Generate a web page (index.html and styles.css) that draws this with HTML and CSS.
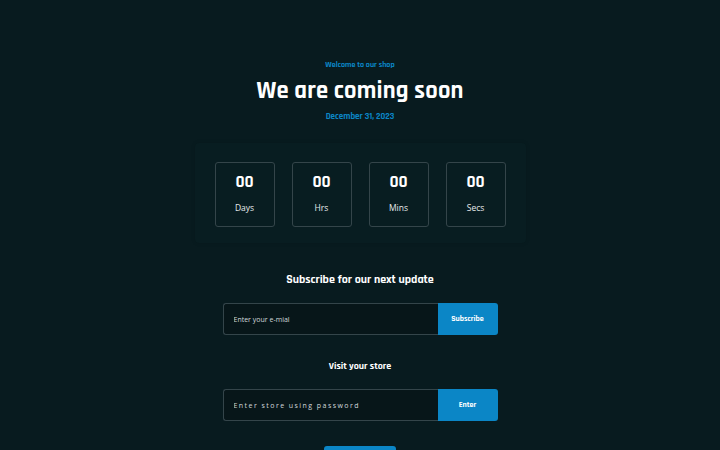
FILE: index.html
```html
<!DOCTYPE html>
<html>
<head>
<meta charset="utf-8">
<link rel="stylesheet" href="styles.css">
</head>
<body>
<main class="page">
  <p class="eyebrow">Welcome to our shop</p>
  <h1 class="title">We are coming soon</h1>
  <p class="date">December 31, 2023</p>
  <div class="countdown">
    <div class="unit"><span class="num">00</span><span class="label">Days</span></div>
    <div class="unit"><span class="num">00</span><span class="label">Hrs</span></div>
    <div class="unit"><span class="num">00</span><span class="label">Mins</span></div>
    <div class="unit"><span class="num">00</span><span class="label">Secs</span></div>
  </div>
  <h2 class="sub-title">Subscribe for our next update</h2>
  <form class="field">
    <input class="input" type="text" placeholder="Enter your e-mial">
    <button class="btn" type="button">Subscribe</button>
  </form>
  <h2 class="sub-title small">Visit your store</h2>
  <form class="field">
    <input class="input spaced" type="password" placeholder="Enter store using password">
    <button class="btn" type="button">Enter</button>
  </form>
  <div class="more"></div>
</main>
</body>
</html>
```
FILE: styles.css
```css
html, body {
  margin: 0;
  padding: 0;
  background: #081b1f;
  height: 100%;
  overflow: hidden;
}
.page {
  display: flex;
  flex-direction: column;
  align-items: center;
  padding-top: 60px;
  font-family: "Rajdhani", "Lato", "Open Sans", sans-serif;
  color: #ffffff;
}
.eyebrow {
  margin: 0;
  font-size: 8px;
  font-weight: 700;
  color: #0b86c6;
  line-height: 11px;
}
.title {
  margin: 6px 0 0;
  font-size: 24.5px;
  font-weight: 700;
  line-height: 28px;
  letter-spacing: 0.2px;
}
.date {
  margin: 6px 0 0;
  font-size: 9px;
  font-weight: 700;
  color: #0b86c6;
  line-height: 12px;
}
.countdown {
  margin-top: 20px;
  display: flex;
  gap: 17px;
  padding: 19px 20px 16px;
  background: #081d21;
  border-radius: 4px;
  box-shadow: 0 0 4px rgba(0,0,0,0.12);
}
.unit {
  width: 58px;
  height: 63px;
  border: 1px solid #34454a;
  border-radius: 3px;
  display: flex;
  flex-direction: column;
  align-items: center;
}
.num {
  margin-top: 9px;
  font-size: 17px;
  font-weight: 700;
  line-height: 20px;
}
.label {
  margin-top: 10px;
  font-family: "Open Sans", sans-serif;
  font-size: 8.5px;
  line-height: 12px;
  color: #e6eaeb;
}
.sub-title {
  margin: 29px 0 0;
  font-size: 12px;
  font-weight: 700;
  line-height: 16px;
}
.sub-title.small {
  margin-top: 23px;
  font-size: 10px;
}
.field {
  margin: 15px 0 0;
  display: flex;
  width: 275px;
  height: 32px;
}
.input {
  flex: 1;
  min-width: 0;
  box-sizing: border-box;
  height: 32px;
  margin: 0;
  padding: 0 10px;
  background: #071619;
  border: 1px solid #34454a;
  border-right: none;
  border-radius: 3px 0 0 3px;
  font-family: "Open Sans", sans-serif;
  font-size: 7px;
  color: #d5dbdc;
  outline: none;
}
.input::placeholder {
  color: #d2d9db;
  opacity: 1;
}
.input.spaced::placeholder {
  letter-spacing: 1.45px;
}
.btn {
  width: 60px;
  height: 32px;
  margin: 0;
  border: none;
  border-radius: 0 3px 3px 0;
  background: #0b86c6;
  color: #ffffff;
  font-family: "Rajdhani", "Lato", sans-serif;
  font-size: 8px;
  font-weight: 700;
}
.more {
  margin-top: 25px;
  width: 72px;
  height: 12px;
  background: #0b86c6;
  border-radius: 3px 3px 0 0;
}
```
